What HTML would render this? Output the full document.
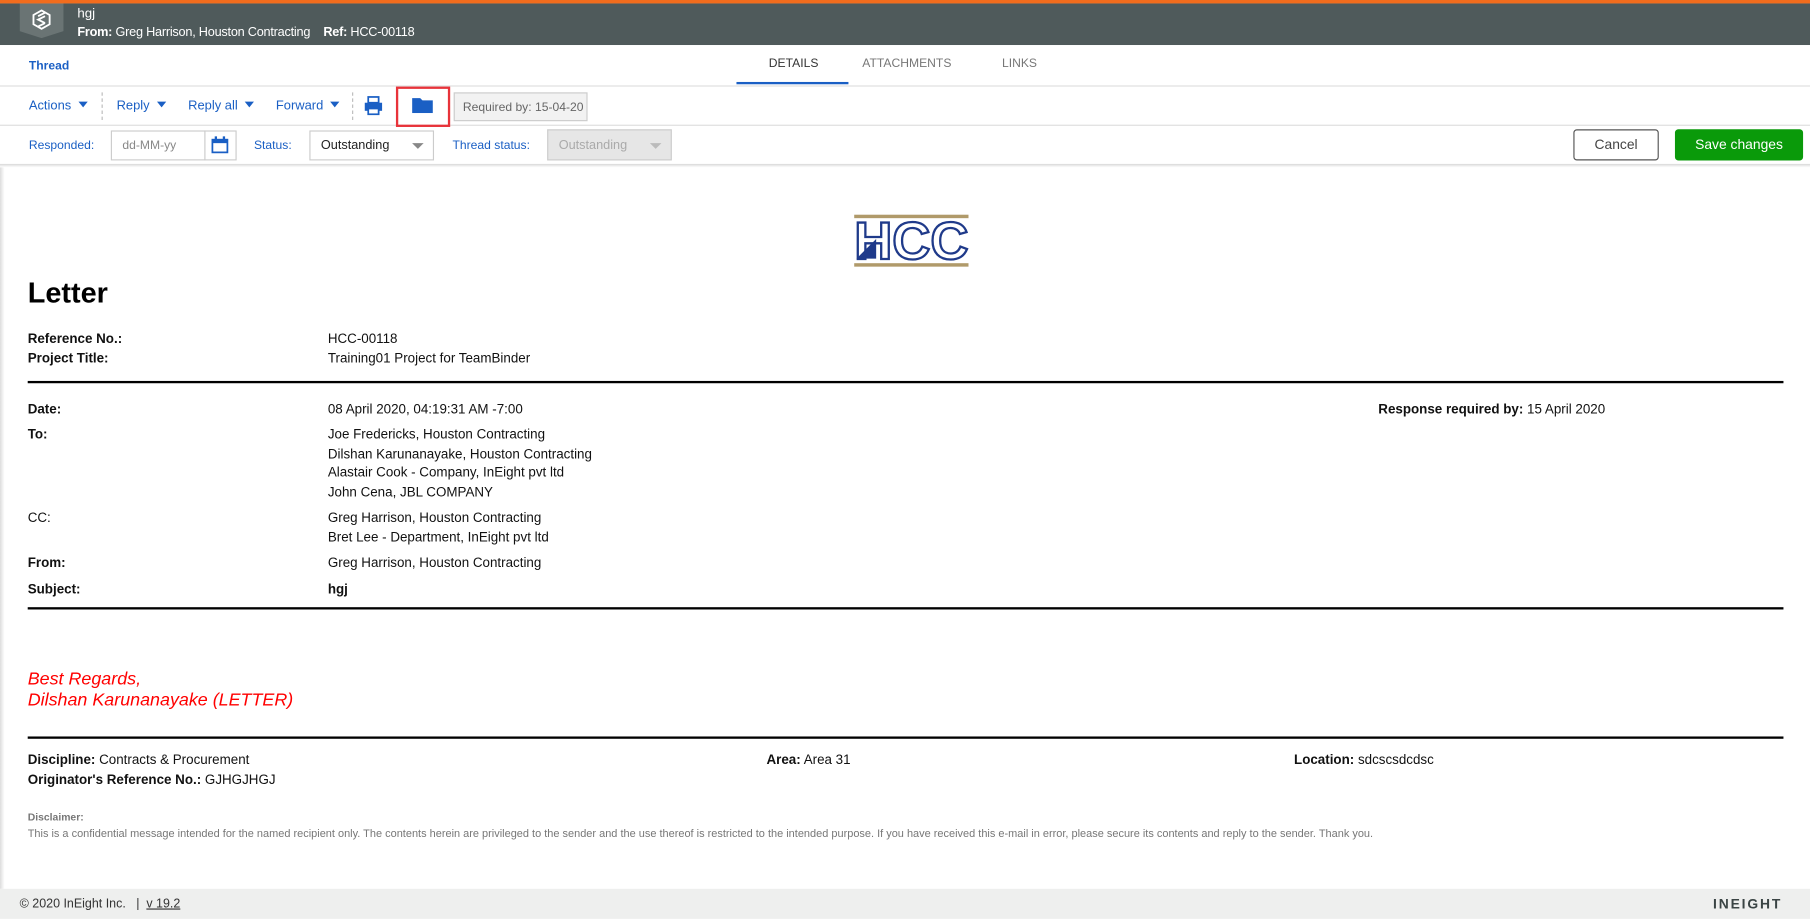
<!DOCTYPE html>
<html><head><meta charset="utf-8"><style>
*{margin:0;padding:0;box-sizing:border-box}
html,body{width:1810px;height:919px;overflow:hidden;background:#fff;font-family:"Liberation Sans",Arial,sans-serif}
#w{position:absolute;left:0;top:0;width:1568px;height:796px;transform:scale(1.15434);transform-origin:0 0;background:#fff}
.a{position:absolute;white-space:nowrap}
.t{font-size:11.6px;color:#111;line-height:14px}
.b{font-weight:bold}
.blue{color:#1a5fc4}
.rule{position:absolute;left:24px;width:1521px;height:2px;background:#000}
.tb{font-size:11.2px}
.caret{display:inline-block;width:0;height:0;border-left:4px solid transparent;border-right:4px solid transparent;border-top:5px solid #1a5fc4;margin-left:6px;vertical-align:2px}
</style></head><body><div id="w">
<div class="a" style="left:0;top:0;width:1568px;height:3px;background:#f26c1d"></div>
<div class="a" style="left:0;top:3px;width:1568px;height:36px;background:#4f5a5b"></div>
<div class="a" style="left:17px;top:3px;width:38px;height:30px;background:#6a7474;clip-path:polygon(0 0,100% 0,100% 80%,50% 100%,0 80%)"></div>
<svg class="a" style="left:27px;top:8px" width="18" height="18" viewBox="0 0 18 18"><polygon points="9,1 16,5 16,13 9,17 2,13 2,5" fill="none" stroke="#fff" stroke-width="1.6"/><path d="M12 6 L6 9 L12 12 M6 6 L12 3 M6 15 L12 12" stroke="#fff" stroke-width="1.6" fill="none"/></svg>
<div class="a" style="left:67px;top:6px;font-size:11.5px;color:#fff">hgj</div>
<div class="a" style="left:67px;top:22px;font-size:11px;letter-spacing:-0.2px;color:#fff"><b>From:</b> Greg Harrison, Houston Contracting &nbsp;&nbsp;&nbsp;<b>Ref:</b> HCC-00118</div>
<div class="a blue b" style="left:25px;top:51px;font-size:10.5px">Thread</div>
<div class="a" style="left:666px;top:49px;font-size:10.5px;color:#333">DETAILS</div>
<div class="a" style="left:638px;top:71px;width:97px;height:2px;background:#1a5fc4"></div>
<div class="a" style="left:747px;top:49px;font-size:10.5px;color:#777">ATTACHMENTS</div>
<div class="a" style="left:868px;top:49px;font-size:10.5px;color:#777">LINKS</div>
<div class="a" style="left:0;top:74px;width:1568px;height:1px;background:#ddd"></div>
<div class="a" style="left:0;top:108px;width:1568px;height:1px;background:#ddd"></div>
<div class="a blue tb" style="left:25px;top:86px">Actions<span class="caret"></span></div>
<div class="a" style="left:88px;top:80px;height:24px;border-left:1px dashed #bbb"></div>
<div class="a blue tb" style="left:101px;top:86px">Reply<span class="caret"></span></div>
<div class="a blue tb" style="left:163px;top:86px">Reply all<span class="caret"></span></div>
<div class="a blue tb" style="left:239px;top:86px">Forward<span class="caret"></span></div>
<div class="a" style="left:305px;top:80px;height:24px;border-left:1px dashed #bbb"></div>
<svg class="a" style="left:315px;top:83px" width="17" height="17" viewBox="0 0 17 17"><rect x="4" y="1" width="9" height="5" fill="none" stroke="#1a5fc4" stroke-width="1.5"/><rect x="1" y="6" width="15" height="7" fill="#1a5fc4"/><rect x="4" y="11" width="9" height="5" fill="#fff" stroke="#1a5fc4" stroke-width="1.5"/></svg>
<div class="a" style="left:343px;top:75px;width:47px;height:35px;border:2px solid #e8333a"></div>
<svg class="a" style="left:357px;top:84px" width="18" height="14" viewBox="0 0 18 14"><path d="M0 1h7l2 2h9v11H0z" fill="#1a5fc4"/></svg>
<div class="a" style="left:393px;top:80px;width:116px;height:25px;background:#f2f2f2;border:1px solid #ccc;font-size:10.5px;color:#666;line-height:25px;padding-left:7px">Required by: 15-04-20</div>
<div class="a blue" style="left:25px;top:120px;font-size:10.5px">Responded:</div>
<div class="a" style="left:96px;top:113px;width:109px;height:26px;border:1px solid #ccc;font-size:10.5px;color:#888;line-height:24px;padding-left:9px">dd-MM-yy</div>
<div class="a" style="left:177px;top:113px;width:1px;height:26px;background:#ccc"></div>
<svg class="a" style="left:183px;top:118px" width="15" height="15" viewBox="0 0 15 15"><rect x="1" y="3" width="13" height="11" fill="none" stroke="#1a5fc4" stroke-width="1.5"/><rect x="1" y="3" width="13" height="3" fill="#1a5fc4"/><rect x="3" y="0" width="2" height="4" fill="#1a5fc4"/><rect x="10" y="0" width="2" height="4" fill="#1a5fc4"/></svg>
<div class="a blue" style="left:220px;top:120px;font-size:10.5px">Status:</div>
<div class="a" style="left:268px;top:113px;width:108px;height:26px;border:1px solid #ccc;font-size:11px;color:#222;line-height:25px;padding-left:9px">Outstanding</div>
<div class="a" style="left:357px;top:124px;border-left:5px solid transparent;border-right:5px solid transparent;border-top:5px solid #888"></div>
<div class="a blue" style="left:392px;top:120px;font-size:10.5px">Thread status:</div>
<div class="a" style="left:474px;top:112px;width:108px;height:27px;border:1px solid #ccc;background:#e6e6e6;font-size:11px;color:#aaa;line-height:26px;padding-left:9px">Outstanding</div>
<div class="a" style="left:563px;top:124px;border-left:5px solid transparent;border-right:5px solid transparent;border-top:5px solid #bbb"></div>
<div class="a" style="left:1363px;top:112px;width:74px;height:27px;border:1px solid #555;border-radius:3px;font-size:12px;color:#444;line-height:25px;text-align:center">Cancel</div>
<div class="a" style="left:1451px;top:112px;width:111px;height:27px;background:#0a9a0a;border-radius:3px;font-size:12px;color:#fff;line-height:27px;text-align:center">Save changes</div>
<div class="a" style="left:0;top:142px;width:1568px;height:3px;background:linear-gradient(#d8d8d8,#fff)"></div>
<div class="a" style="left:0;top:145px;width:4px;height:625px;background:linear-gradient(90deg,#ddd,#fff)"></div>
<svg class="a" style="left:739px;top:185px" width="101" height="47" viewBox="0 0 101 47">
<rect x="1" y="1" width="99" height="3" fill="#b09a6a"/>
<rect x="1" y="43" width="99" height="3" fill="#b09a6a"/>
<text x="1" y="39.5" font-family="Liberation Sans, Arial, sans-serif" font-weight="bold" font-size="46" textLength="99" lengthAdjust="spacingAndGlyphs" fill="#fff" stroke="#1f3a8a" stroke-width="2">HCC</text>
<polygon points="3,39 20,22 20,39" fill="#1f3a8a"/>
</svg>
<div class="a b" style="left:24px;top:240px;font-size:25px;color:#000">Letter</div>
<div class="a t b" style="left:24px;top:287px">Reference No.:</div>
<div class="a t" style="left:284px;top:287px">HCC-00118</div>
<div class="a t b" style="left:24px;top:304px">Project Title:</div>
<div class="a t" style="left:284px;top:304px">Training01 Project for TeamBinder</div>
<div class="rule" style="top:330px"></div>
<div class="a t b" style="left:24px;top:348px">Date:</div>
<div class="a t" style="left:284px;top:348px">08 April 2020, 04:19:31 AM -7:00</div>
<div class="a t" style="left:1194px;top:348px"><b>Response required by:</b> 15 April 2020</div>
<div class="a t b" style="left:24px;top:370px">To:</div>
<div class="a t" style="left:284px;top:369px;line-height:16.5px;white-space:normal;width:400px">Joe Fredericks, Houston Contracting<br>Dilshan Karunanayake, Houston Contracting<br>Alastair Cook - Company, InEight pvt ltd<br>John Cena, JBL COMPANY</div>
<div class="a t" style="left:24px;top:442px">CC:</div>
<div class="a t" style="left:284px;top:441px;line-height:16.5px">Greg Harrison, Houston Contracting<br>Bret Lee - Department, InEight pvt ltd</div>
<div class="a t b" style="left:24px;top:481px">From:</div>
<div class="a t" style="left:284px;top:481px">Greg Harrison, Houston Contracting</div>
<div class="a t b" style="left:24px;top:504px">Subject:</div>
<div class="a t b" style="left:284px;top:504px">hgj</div>
<div class="rule" style="top:526px"></div>
<div class="a" style="left:24px;top:580px;font-size:15.5px;font-style:italic;color:#f00;line-height:18px">Best Regards,<br>Dilshan Karunanayake (LETTER)</div>
<div class="rule" style="top:638px"></div>
<div class="a t" style="left:24px;top:652px"><b>Discipline:</b> Contracts &amp; Procurement</div>
<div class="a t" style="left:664px;top:652px"><b>Area:</b> Area 31</div>
<div class="a t" style="left:1121px;top:652px"><b>Location:</b> sdcscsdcdsc</div>
<div class="a t" style="left:24px;top:669px"><b>Originator's Reference No.:</b> GJHGJHGJ</div>
<div class="a b" style="left:24px;top:703px;font-size:9px;color:#777">Disclaimer:</div>
<div class="a" style="left:24px;top:717px;font-size:9.5px;color:#777">This is a confidential message intended for the named recipient only. The contents herein are privileged to the sender and the use thereof is restricted to the intended purpose. If you have received this e-mail in error, please secure its contents and reply to the sender. Thank you.</div>
<div class="a" style="left:0;top:770px;width:1568px;height:26px;background:#eeefee"></div>
<div class="a" style="left:17px;top:777px;font-size:10.8px;color:#333">© 2020 InEight Inc. &nbsp; | &nbsp;<u>v 19.2</u></div>
<div class="a b" style="left:1484px;top:776px;font-size:12px;color:#3a4444;letter-spacing:1.6px">INEIGHT</div>
</div></body></html>
